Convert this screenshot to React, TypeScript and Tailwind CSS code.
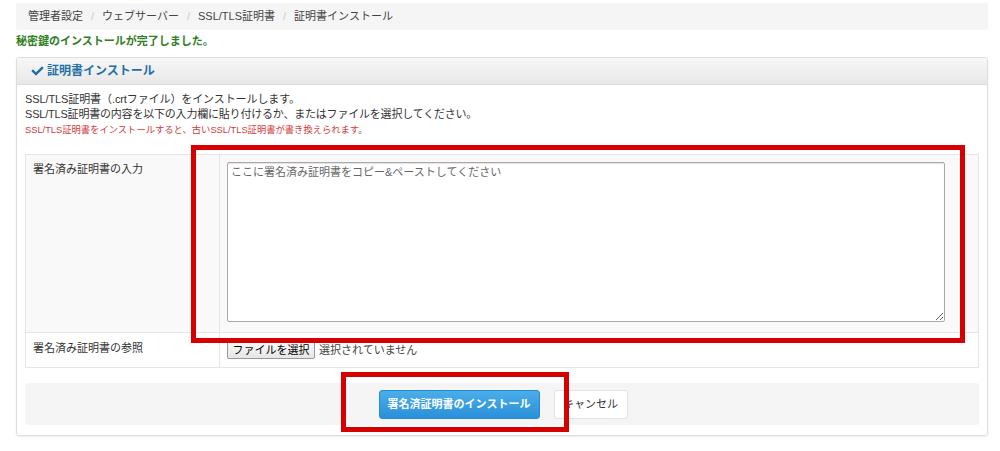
import { FaCheck } from 'react-icons/fa';

const crumbs = ['管理者設定', 'ウェブサーバー', 'SSL/TLS証明書', '証明書インストール'];

export default function App() {
  return (
    <div
      className="relative min-h-[451px] bg-white pl-4 pr-3 pt-[3px] text-[11px] text-[#333]"
      style={{ fontFamily: '"Liberation Sans", "Noto Sans CJK JP", sans-serif' }}
    >
      {/* Breadcrumb */}
      <div className="flex h-[27px] items-center rounded-[3px] bg-[#f5f5f5] px-3 text-[#444]">
        {crumbs.map((c, i) => (
          <span key={c} className="flex items-center">
            {i > 0 && <span className="px-[8px] text-[#ccc]">/</span>}
            <span>{c}</span>
          </span>
        ))}
      </div>

      <p className="mt-[5px] h-[13px] font-bold leading-[13px] text-[#2f7d22]">
        秘密鍵のインストールが完了しました。
      </p>

      {/* Panel */}
      <div className="mt-[9px] h-[379px] rounded-[3px] border border-[#ddd] shadow-[0_1px_2px_rgba(0,0,0,0.08)]">
        <div className="flex h-[27px] items-center gap-[3px] border-b border-[#ddd] bg-gradient-to-b from-[#f7f7f7] to-[#e8e8e8] pl-[14px] text-[12px] font-bold text-[#1f6fa8]">
          <FaCheck className="h-[12px] w-[13px]" />
          <span>証明書インストール</span>
        </div>

        <div className="px-2 pt-[7px]">
          <p className="leading-[15px] tracking-[-0.1px]">SSL/TLS証明書（.crtファイル）をインストールします。</p>
          <p className="leading-[15px] tracking-[-0.2px]">
            SSL/TLS証明書の内容を以下の入力欄に貼り付けるか、またはファイルを選択してください。
          </p>
          <p className="text-[9.3px] leading-[16px] text-[#d03a3a]">
            SSL/TLS証明書をインストールすると、古いSSL/TLS証明書が書き換えられます。
          </p>

          {/* Form table */}
          <table className="mt-[16px] w-full border-collapse border border-[#e6e6e6]">
            <tbody>
              <tr className="h-[178px] bg-[#f9f9f9]">
                <td className="w-[194px] border border-[#e6e6e6] px-[7px] pt-[6px] align-top">
                  署名済み証明書の入力
                </td>
                <td className="border border-[#e6e6e6] px-[7px] pt-[7px] pb-[10px] align-top">
                  <textarea
                    className="block h-[160px] w-[718px] resize-y rounded-[2px] border border-[#aaa] bg-white px-[3px] py-[1px] text-[11px] text-[#333] shadow-[inset_0_1px_1px_rgba(0,0,0,0.12)] outline-none placeholder:text-[#666]"
                    placeholder="ここに署名済み証明書をコピー&ペーストしてください"
                  />
                </td>
              </tr>
              <tr className="h-[35px] bg-white">
                <td className="border border-[#e6e6e6] px-[7px] pt-[7px] align-top">署名済み証明書の参照</td>
                <td className="border border-[#e6e6e6] px-[7px] align-middle">
                  <div className="flex items-center gap-[4px]">
                    <span className="flex h-[18px] w-[88px] items-center justify-center rounded-[2px] border border-[#999] bg-gradient-to-b from-[#fbfbfb] to-[#e6e6e6] text-[11px] text-black">
                      ファイルを選択
                    </span>
                    <span className="text-[11px] text-[#444]">選択されていません</span>
                  </div>
                </td>
              </tr>
            </tbody>
          </table>

          {/* Actions */}
          <div className="mt-[15px] flex h-[42px] items-center justify-center gap-[14px] rounded-[3px] bg-[#f5f5f5] pl-[2px]">
            <button className="h-[29px] w-[161px] rounded-[3px] border border-[#2a8ad0] bg-gradient-to-b from-[#4aaeea] to-[#2990d8] text-[11px] font-bold text-white">
              署名済証明書のインストール
            </button>
            <button className="h-[29px] w-[74px] rounded-[3px] border border-[#e2e2e2] bg-white text-[11px] text-[#333]">
              キャンセル
            </button>
          </div>
        </div>
      </div>

      {/* Annotation boxes */}
      <div className="pointer-events-none absolute left-[191px] top-[145px] h-[198px] w-[774px] border-[5px] border-[#d60000]" />
      <div className="pointer-events-none absolute left-[341px] top-[372px] h-[60px] w-[228px] border-[5px] border-[#d60000]" />
    </div>
  );
}
